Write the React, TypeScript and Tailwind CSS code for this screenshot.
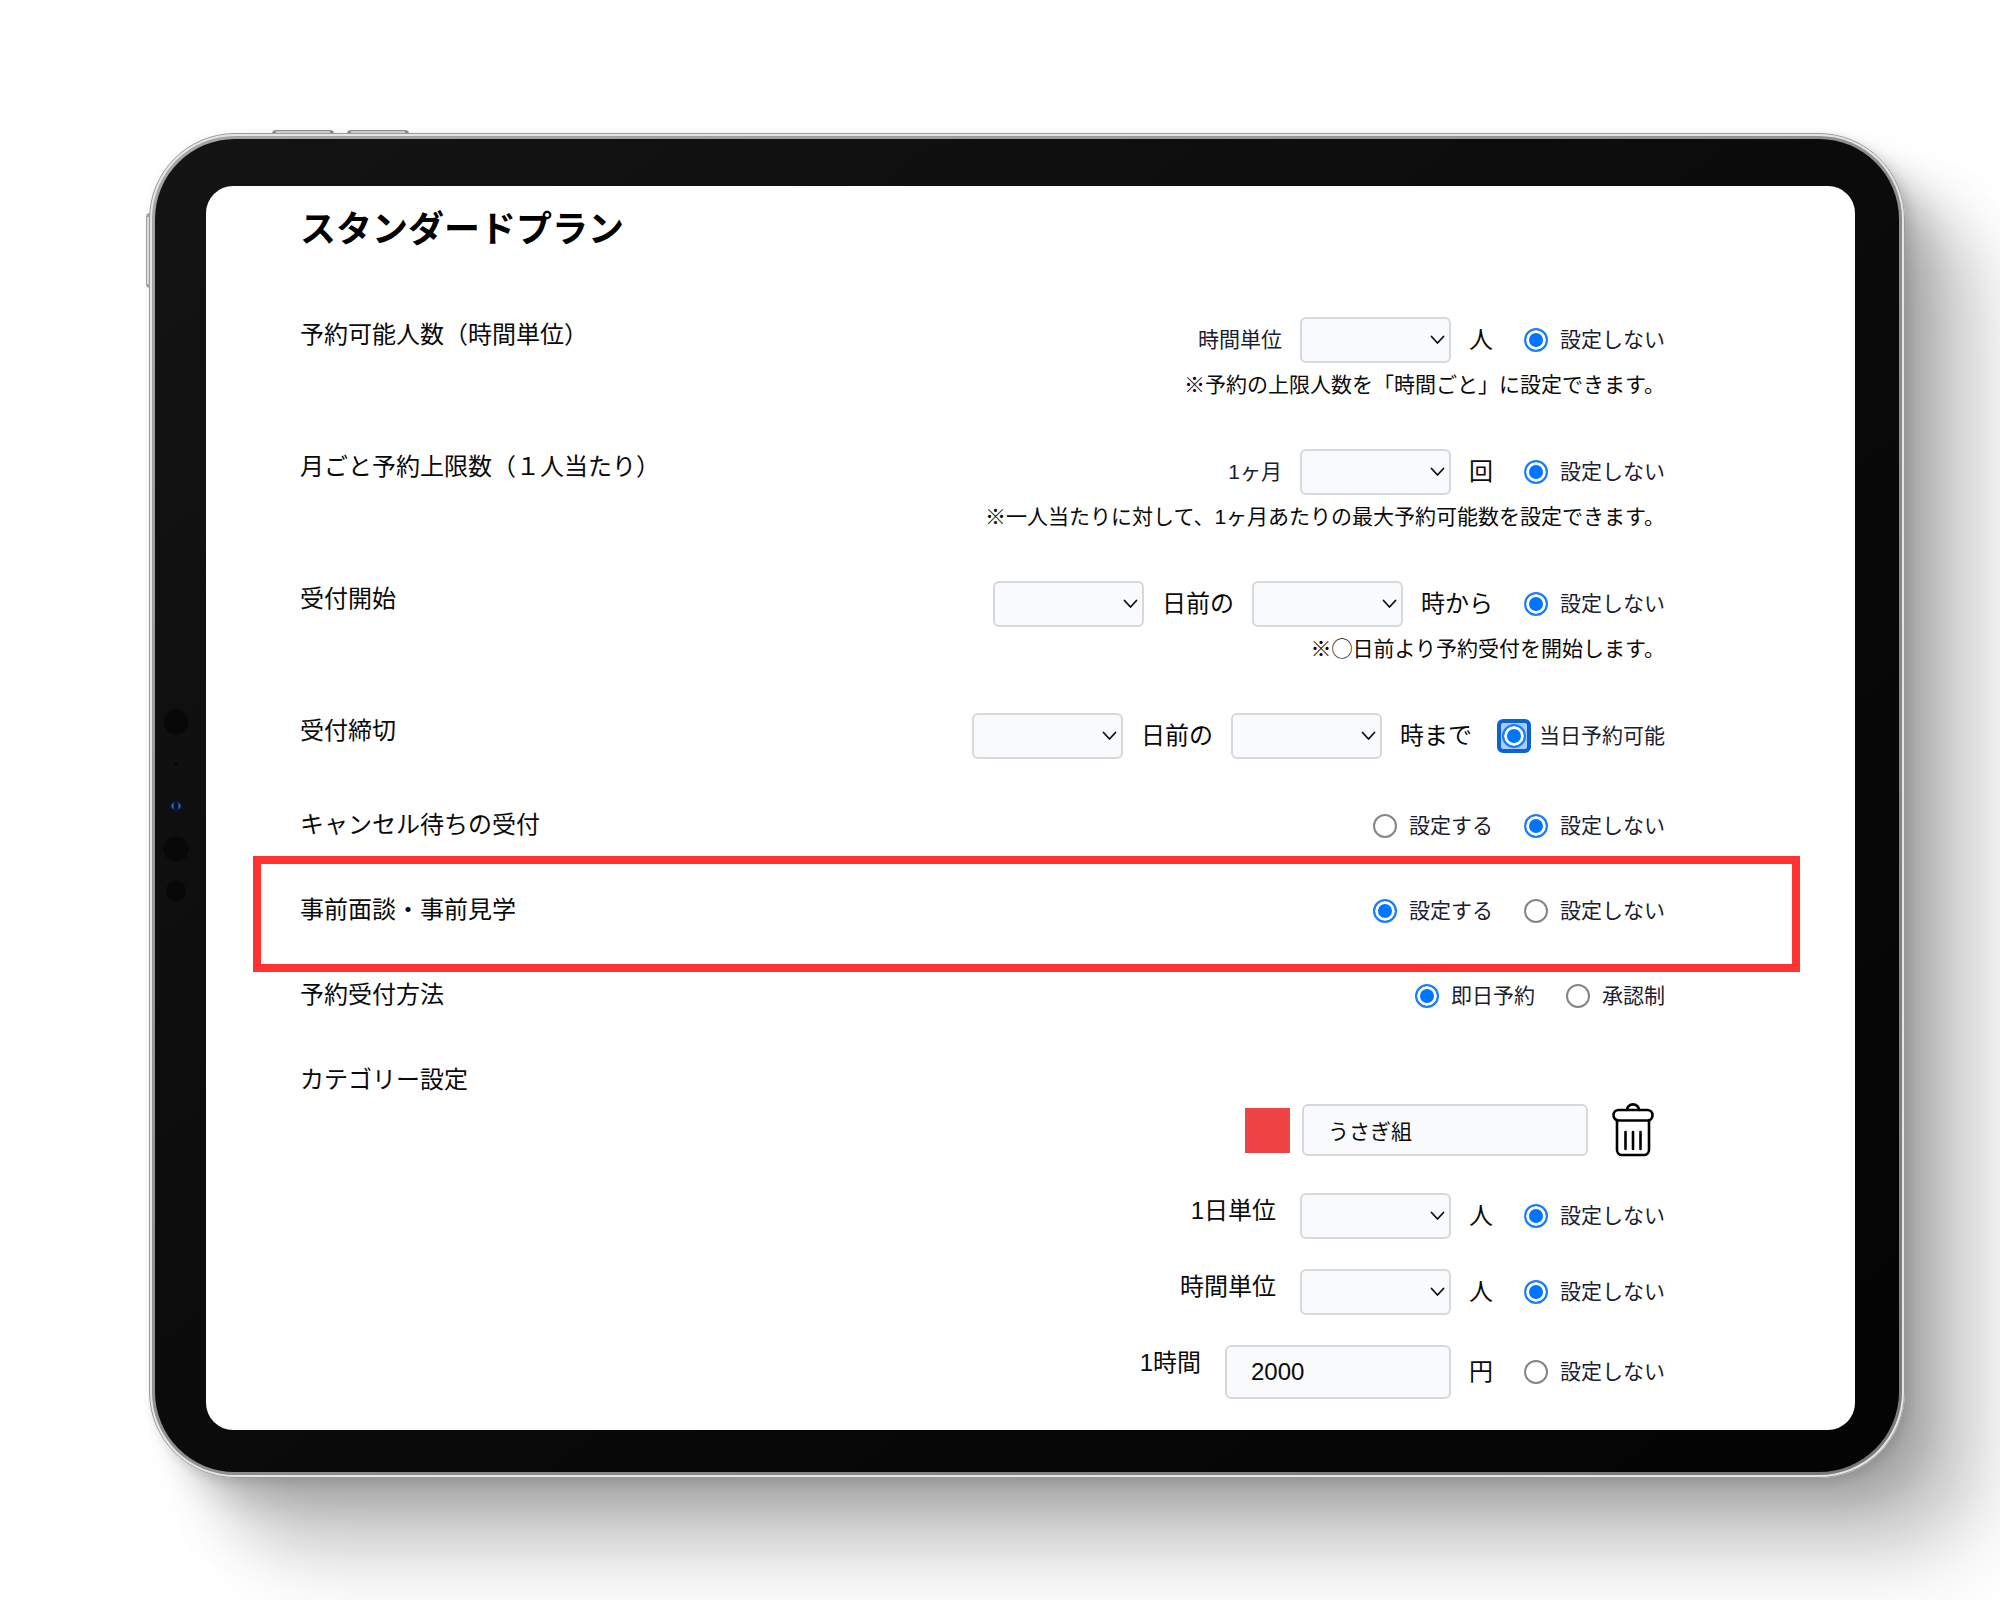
import type { ReactNode } from 'react';

function Chevron() {
  return (
    <svg
      className="pointer-events-none absolute top-1/2 right-[6px] h-[10px] w-[15px] -translate-y-1/2"
      viewBox="0 0 15 10"
      fill="none"
      aria-hidden="true"
    >
      <path d="M1.5 1.5 7.5 8 13.5 1.5" stroke="#111" strokeWidth="1.8" strokeLinecap="round" strokeLinejoin="round" />
    </svg>
  );
}

function Select({ label }: { label: string }) {
  return (
    <span className="relative block h-[46px] w-[151px]">
      <select
        aria-label={label}
        className="h-full w-full appearance-none rounded-md border-2 border-[#d5d8dc] bg-[#f9fafb] px-4 text-[21px] outline-none"
      >
        <option value="" />
      </select>
      <Chevron />
    </span>
  );
}

function Radio({
  name,
  label,
  checked = false,
  focused = false,
}: {
  name: string;
  label: string;
  checked?: boolean;
  focused?: boolean;
}) {
  const input = (
    <input
      type="radio"
      name={name}
      defaultChecked={checked}
      className="block h-6 w-6 shrink-0 appearance-none rounded-full border-2 border-[#858585] bg-white checked:border-[#1a7cff] checked:bg-[#0075ff] checked:shadow-[inset_0_0_0_3px_white]"
    />
  );
  return (
    <label className={focused ? 'flex items-center gap-2' : 'flex items-center gap-3'}>
      {focused ? (
        <span className="-ml-1.5 rounded-md border-4 border-[#0b63ce] bg-[#a9cdfb] p-px">{input}</span>
      ) : (
        input
      )}
      <span className="text-[21px] leading-8 whitespace-nowrap text-[#1a2030]">{label}</span>
    </label>
  );
}

function Unit({ children }: { children: ReactNode }) {
  return <span className="text-2xl leading-9 whitespace-nowrap">{children}</span>;
}

function Row({ label, children }: { label: string; children: ReactNode }) {
  return (
    <section className="relative flex items-start justify-between">
      <h2 className="text-2xl leading-9 whitespace-nowrap">{label}</h2>
      {children}
    </section>
  );
}

function Controls({ children, note }: { children: ReactNode; note?: string }) {
  return (
    <div className="flex flex-col items-end gap-1.5">
      <div className="flex min-h-[37px] items-center gap-[31px]">{children}</div>
      {note && <p className="text-[21px] leading-8 whitespace-nowrap">{note}</p>}
    </div>
  );
}

function Fields({ children }: { children: ReactNode }) {
  return <div className="flex items-center gap-[18px]">{children}</div>;
}

function Lead({ children }: { children: ReactNode }) {
  return <span className="text-[21px] leading-8 whitespace-nowrap text-[#1a2030]">{children}</span>;
}

function SubRow({ label, children }: { label: string; children: ReactNode }) {
  return (
    <div className="flex items-start gap-6">
      <h3 className="text-2xl leading-9 whitespace-nowrap">{label}</h3>
      <div className="flex items-center gap-[31px]">{children}</div>
    </div>
  );
}

function TrashIcon() {
  return (
    <svg className="h-[54px] w-[42px]" viewBox="0 0 42 54" fill="none" stroke="#000" strokeWidth="2.6" strokeLinecap="round" strokeLinejoin="round" aria-hidden="true">
      <path d="M15 7a6 5.6 0 0 1 12 0" />
      <rect x="1.5" y="7" width="39" height="10.5" rx="5.2" />
      <path d="M5 18v29a5 5 0 0 0 5 5h22a5 5 0 0 0 5-5V18" />
      <path d="M13.5 29v17M21 29v17M28.5 29v17" />
    </svg>
  );
}

function Cameras() {
  return (
    <svg className="absolute top-1/2 left-[6px] h-[200px] w-[30px] -translate-y-1/2" viewBox="0 0 30 200" aria-hidden="true">
      <circle cx="15" cy="16" r="12.5" fill="#080808" />
      <circle cx="15" cy="58" r="2" fill="#070707" />
      <circle cx="15" cy="100" r="6.5" fill="#0a1420" />
      <ellipse cx="15" cy="100" rx="5.5" ry="4" fill="#0f2a6b" />
      <ellipse cx="15" cy="100" rx="2" ry="3.5" fill="#070d1c" />
      <path d="M12.3 97.5q-1.6 2.5 0 5M17.7 97.5q1.6 2.5 0 5" stroke="#5f80bd" strokeWidth="1" fill="none" />
      <circle cx="15" cy="143" r="12.5" fill="#080808" />
      <circle cx="15" cy="185" r="10" fill="#080808" />
    </svg>
  );
}

function PlanSettings() {
  return (
    <main className="rounded-[27px] bg-white pt-4 pr-[190px] pb-[31px] pl-[94px] text-[#0a0a0a]">
      <h1 className="text-4xl leading-[55px] font-bold text-black">スタンダードプラン</h1>
      <form className="mt-[60px] flex flex-col gap-12">
        <Row label="予約可能人数（時間単位）">
          <Controls note="※予約の上限人数を「時間ごと」に設定できます。">
            <Fields>
              <Lead>時間単位</Lead>
              <Select label="予約可能人数" />
              <Unit>人</Unit>
            </Fields>
            <Radio name="capacity" label="設定しない" checked />
          </Controls>
        </Row>

        <Row label="月ごと予約上限数（１人当たり）">
          <Controls note="※一人当たりに対して、1ヶ月あたりの最大予約可能数を設定できます。">
            <Fields>
              <Lead>1ヶ月</Lead>
              <Select label="月ごと予約上限数" />
              <Unit>回</Unit>
            </Fields>
            <Radio name="monthly" label="設定しない" checked />
          </Controls>
        </Row>

        <Row label="受付開始">
          <Controls note="※◯日前より予約受付を開始します。">
            <Fields>
              <Select label="受付開始日" />
              <Unit>日前の</Unit>
              <Select label="受付開始時刻" />
              <Unit>時から</Unit>
            </Fields>
            <Radio name="open" label="設定しない" checked />
          </Controls>
        </Row>

        <Row label="受付締切">
          <Controls>
            <Fields>
              <Select label="受付締切日" />
              <Unit>日前の</Unit>
              <Select label="受付締切時刻" />
              <Unit>時まで</Unit>
            </Fields>
            <Radio name="close" label="当日予約可能" checked focused />
          </Controls>
        </Row>

        <Row label="キャンセル待ちの受付">
          <Controls>
            <Radio name="waitlist" label="設定する" />
            <Radio name="waitlist" label="設定しない" checked />
          </Controls>
        </Row>

        <Row label="事前面談・事前見学">
          <div className="pointer-events-none absolute -top-9 -right-[135px] -bottom-[43px] -left-[47px] border-8 border-[#ff3131]" />
          <Controls>
            <Radio name="interview" label="設定する" checked />
            <Radio name="interview" label="設定しない" />
          </Controls>
        </Row>

        <Row label="予約受付方法">
          <Controls>
            <Radio name="method" label="即日予約" checked />
            <Radio name="method" label="承認制" />
          </Controls>
        </Row>

        <Row label="カテゴリー設定">
          <div className="flex flex-col items-end pt-[42px]">
            <div className="flex items-center pr-[11px]">
              <button type="button" aria-label="色" className="h-[45px] w-[45px] bg-[#ef4444]" />
              <input
                type="text"
                aria-label="カテゴリー名"
                defaultValue="うさぎ組"
                className="ml-3 h-[52px] w-[286px] rounded-md border-2 border-[#d5d8dc] bg-[#f9fafb] px-6 text-[21px] outline-none"
              />
              <button type="button" aria-label="削除" className="-my-px ml-6">
                <TrashIcon />
              </button>
            </div>
            <div className="mt-[37px] flex flex-col items-end gap-[30px]">
              <SubRow label="1日単位">
                <Fields>
                  <Select label="1日単位" />
                  <Unit>人</Unit>
                </Fields>
                <Radio name="per-day" label="設定しない" checked />
              </SubRow>
              <SubRow label="時間単位">
                <Fields>
                  <Select label="時間単位" />
                  <Unit>人</Unit>
                </Fields>
                <Radio name="per-slot" label="設定しない" checked />
              </SubRow>
              <SubRow label="1時間">
                <Fields>
                  <input
                    type="text"
                    aria-label="1時間の料金"
                    defaultValue="2000"
                    className="h-[54px] w-[226px] rounded-md border-2 border-[#d5d8dc] bg-[#f9fafb] px-6 text-2xl outline-none"
                  />
                  <Unit>円</Unit>
                </Fields>
                <Radio name="price" label="設定しない" />
              </SubRow>
            </div>
          </div>
        </Row>
      </form>
    </main>
  );
}

export default function App() {
  return (
    <div className="min-h-screen overflow-hidden bg-white pt-[133px] pr-[95px] pb-[121px] pl-[149px] font-['Liberation_Sans','Noto_Sans_CJK_JP',sans-serif]">
      <div className="relative rounded-[86px] shadow-[4px_4px_12px_rgba(0,0,0,0.14),25px_25px_30px_rgba(0,0,0,0.12),55px_55px_60px_rgba(0,0,0,0.15),90px_90px_80px_rgba(0,0,0,0.12)]">
        <span className="absolute -top-[3px] left-[123px] h-1 w-[62px] rounded-t-sm border-x-4 border-t border-[#8a8c8c] bg-[#c9cbcb]" />
        <span className="absolute -top-[3px] left-[198px] h-1 w-[62px] rounded-t-sm border-x-4 border-t border-[#8a8c8c] bg-[#c9cbcb]" />
        <span className="absolute top-20 -left-[3px] h-[75px] w-1 rounded-l-sm border-y-4 border-l border-[#a0a2a2] bg-[#d9dbdb]" />
        <div className="relative rounded-[86px] border border-[#9a9c9c] bg-[#e4e5e5] p-[2px]">
          <div className="rounded-[83px] bg-linear-to-br from-[#a5a7a7] to-[#77797a] p-[3px]">
            <div className="relative rounded-[80px] bg-linear-to-br from-[#141414] to-[#040404] pt-[47px] pr-11 pb-[42px] pl-[51px]">
              <Cameras />
              <PlanSettings />
            </div>
          </div>
        </div>
      </div>
    </div>
  );
}
